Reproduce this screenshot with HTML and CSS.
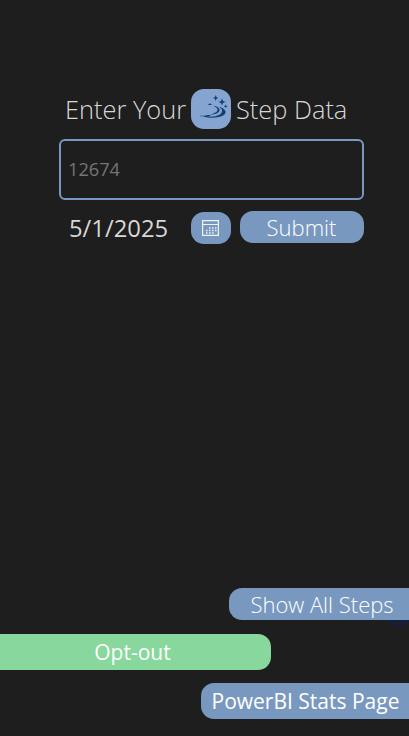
FILE: index.html
```
<!DOCTYPE html>
<html lang="en">
<head>
<meta charset="utf-8">
<title>Step Data</title>
<link rel="stylesheet" href="styles.css">
</head>
<body>
<main class="screen">
  <form class="entry">
    <h1 class="title">
      <span class="before">Enter Your</span>
      <span class="logo">
        <svg width="40" height="40" viewBox="0 0 40 40" fill="#123f78">
          <path d="M24.700 6l.8 2.200 2.200.8-2.200.8-.8 2.200-.8-2.200-2.200-.8 2.200-.8z"/>
          <path d="M31 9.500l1 2.500 2.500 1-2.500 1-1 2.500-1-2.500-2.500-1 2.500-1z"/>
          <path d="M34.700 15.500l.6 1.200 1.200.6-1.200.6-.6 1.200-.6-1.200-1.200-.6 1.200-.6z"/>
          <path d="M16.800 16l2.200-1.700 2 1.700z"/>
          <path d="M22 16.800c4 .4 7 2.200 6.500 4.700-.6 2.700-4.500 3.700-10.500 4.700 4.500-1.700 8-3 8.500-5 .4-1.800-1.500-3.200-4.500-4.400z"/>
          <path d="M28 17.500c5 1.500 8.500 5 5.500 8-3.200 3-11 3.700-19.500 3 8-.6 14-1.700 16.200-4.300 1.800-2.200.8-4.500-2.200-6.700z"/>
          <path d="M9 26.700h4.500l3.500-.7h3l-2 1.200h4l-6 .8H13v-.8H9z"/>
        </svg>
      </span>
      <span class="after">Step Data</span>
    </h1>
    <input class="steps" type="text" placeholder="12674" aria-label="Steps">
    <div class="row">
      <span class="date">5/1/2025</span>
      <button class="calendar" type="button" aria-label="Choose date">
        <svg width="17" height="16" viewBox="0 0 17 16" fill="none" stroke="#eef2fa">
          <path d="M.6.6h15.800v14.800H.6zM.6 4.500h15.800" stroke-width="1.200"/>
          <path d="M7 8h1.500M10 8h1.500M13 8h1.500M4 10.500h1.500M7 10.500h1.500M10 10.500h1.500M13 10.500h1.500M4 13h1.500M7 13h1.500M10 13h1.500" stroke-width="1.500"/>
        </svg>
      </button>
      <button class="submit" type="button">Submit</button>
    </div>
  </form>
  <nav class="actions">
    <div class="all-wrap"><span class="outline"></span><button class="all" type="button">Show All Steps</button></div>
    <button class="opt" type="button">Opt-out</button>
    <button class="stats" type="button">PowerBI Stats Page</button>
  </nav>
</main>
</body>
</html>
```

FILE: styles.css
```
* { box-sizing: border-box; }
body {
  margin: 0;
  background: #1e1e1e;
  color: #d8d8d8;
  font-family: "Open Sans", sans-serif;
  overflow: hidden;
}
button {
  border: 0;
  padding: 0;
  background: #7998c0;
  color: #fff;
  font-family: inherit;
  white-space: nowrap;
}
svg { display: block; }
.screen {
  height: 736px;
  display: flex;
  flex-direction: column;
  justify-content: space-between;
  padding: 89px 0 17px;
}
.entry { width: 305px; margin-left: 59px; }
.title {
  display: flex;
  align-items: center;
  height: 40px;
  margin: 0 0 10px;
  font-size: 25.4px;
  font-weight: 300;
  white-space: nowrap;
}
.before { width: 132px; padding: 0 0 1px 6px; }
.logo {
  width: 39.5px;
  height: 40px;
  border-radius: 13px;
  background: #85a4d0;
}
.after { padding: 0 0 1px 5.5px; }
.steps {
  display: block;
  width: 305px;
  height: 61px;
  padding: 0 7px 2px;
  border: 2px solid #7998c0;
  border-radius: 6px;
  background: transparent;
  color: #d8d8d8;
  font: 18.2px "Open Sans", sans-serif;
}
.steps::placeholder { color: #757575; }
.row { display: flex; align-items: center; height: 33px; margin-top: 11px; }
.date { width: 132px; padding-left: 10px; font-size: 23.8px; white-space: nowrap; }
.calendar {
  display: flex;
  align-items: center;
  justify-content: center;
  width: 39.5px;
  height: 32px;
  margin: 1px 9px 0 0;
  border-radius: 13px;
}
.submit {
  width: 124px;
  height: 32px;
  border-radius: 13px;
  font-size: 22px;
  font-weight: 300;
  line-height: 32px;
  margin-bottom: 1px;
}
.actions { display: flex; flex-direction: column; }
.all-wrap { position: relative; align-self: flex-end; width: 180px; height: 32px; margin-bottom: 14px; }
.all {
  position: relative;
  width: 100%;
  height: 32px;
  padding-left: 6px;
  border-radius: 13px 0 0 13px;
  font-size: 22px;
  font-weight: 300;
  line-height: 32px;
}
.outline {
  position: absolute;
  right: 0;
  bottom: -5px;
  width: 20px;
  height: 16px;
  border: 2px solid #0c1f58;
  border-radius: 7px;
}
.opt {
  width: 271px;
  height: 36px;
  margin-bottom: 13px;
  padding-right: 6px;
  border-radius: 0 13px 13px 0;
  background: #88d79d;
  font-size: 21px;
  line-height: 36px;
}
.stats {
  align-self: flex-end;
  width: 208px;
  height: 36px;
  padding-left: 1px;
  border-radius: 13px 0 0 13px;
  font-size: 21px;
  line-height: 36px;
}
```
